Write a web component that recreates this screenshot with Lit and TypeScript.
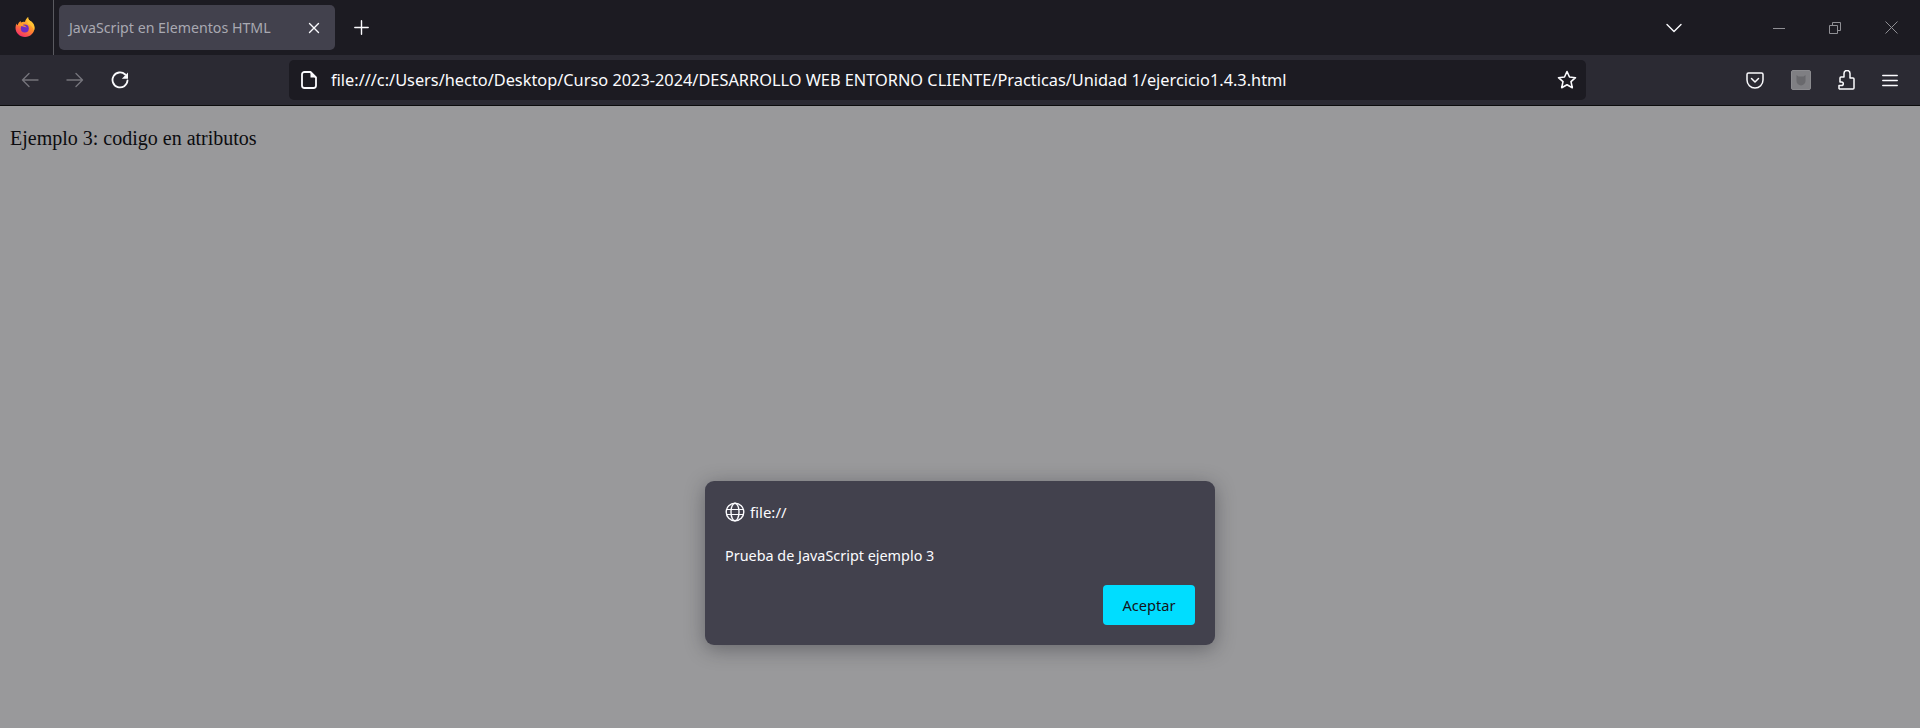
import { LitElement, html, css } from 'lit';
import { customElement } from 'lit/decorators.js';

@customElement('app-root')
export class AppRoot extends LitElement {
  static styles = css`
    :host {
      display: block;
      position: relative;
      width: 1920px;
      height: 728px;
      overflow: hidden;
      font-family: 'Noto Sans', 'Open Sans', sans-serif;
      background-color: #99999b;
    }

    svg {
      display: block;
      flex: none;
      fill: none;
      stroke: currentColor;
      stroke-width: 1.4;
      stroke-linecap: round;
      stroke-linejoin: round;
    }

    .tabbar {
      height: 55px;
      display: flex;
      align-items: center;
      background-color: #1c1b22;
      color: #fbfbfe;
    }

    .logo-box {
      width: 53px;
      height: 55px;
      display: flex;
      align-items: center;
      justify-content: center;
      border-right: 1px solid #5a5a60;
    }

    .logo-box svg {
      stroke: none;
      margin-left: -3px;
      margin-top: -1px;
    }

    .tab {
      width: 276px;
      height: 45px;
      margin-left: 5px;
      padding: 0 15px 0 10px;
      box-sizing: border-box;
      display: flex;
      align-items: center;
      justify-content: space-between;
      background-color: #42414d;
      border-radius: 5px;
      font-size: 14.2px;
      color: #a9a9b2;
    }

    .tab svg {
      color: #fbfbfe;
    }

    .new-tab {
      margin-left: 19px;
      color: #fbfbfe;
    }

    .spacer {
      flex: 1;
    }

    .tab-list {
      margin-right: 91px;
    }

    .window-controls {
      display: flex;
      align-items: center;
      gap: 44px;
      padding-right: 22px;
      color: #8f8f94;
    }

    .toolbar {
      height: 50px;
      display: flex;
      align-items: center;
      background-color: #2b2a33;
      border-bottom: 1px solid #0c0c0d;
      color: #fbfbfe;
    }

    .nav {
      width: 289px;
      display: flex;
      align-items: center;
      gap: 27px;
      padding-left: 21px;
      box-sizing: border-box;
    }

    .nav .off {
      color: #75747b;
    }

    .urlbar {
      width: 1297px;
      height: 40px;
      display: flex;
      align-items: center;
      padding: 0 9px 0 12px;
      box-sizing: border-box;
      background-color: #1c1b22;
      border-radius: 5px;
      font-size: 16.33px;
      color: #fbfbfe;
      white-space: nowrap;
    }

    .urlbar .url {
      flex: 1;
      margin-left: 14px;
    }

    .actions {
      flex: 1;
      display: flex;
      align-items: center;
      justify-content: flex-end;
      gap: 27px;
      padding-right: 22px;
    }

    .ext {
      width: 20px;
      height: 20px;
      box-sizing: border-box;
      border: 1px solid #8b8b8f;
      border-radius: 2px;
      background-color: #7f7f83;
      display: flex;
      align-items: center;
      justify-content: center;
      color: #69696d;
    }

    .page {
      padding: 21px 10px 0;
      font-family: 'Liberation Serif', serif;
      font-size: 20px;
      line-height: 23px;
      color: #0c0c0f;
    }

    .overlay {
      position: absolute;
      left: 0;
      right: 0;
      top: 106px;
      bottom: 0;
      display: flex;
      align-items: flex-end;
      justify-content: center;
      padding-bottom: 83px;
      box-sizing: border-box;
    }

    .dialog {
      width: 510px;
      height: 164px;
      padding: 19px 20px 20px;
      box-sizing: border-box;
      display: flex;
      flex-direction: column;
      background-color: #42414d;
      border-radius: 9px;
      box-shadow: 0 4px 20px rgba(28, 27, 34, 0.4);
      color: #fbfbfe;
      font-size: 14.4px;
    }

    .origin {
      display: flex;
      align-items: center;
      gap: 5px;
      height: 24px;
      font-size: 15px;
    }

    .message {
      margin-top: 20px;
      line-height: 24px;
    }

    .buttons {
      margin-top: auto;
      display: flex;
      justify-content: flex-end;
    }

    .accept {
      width: 92px;
      height: 40px;
      border: none;
      border-radius: 4px;
      background-color: #00ddff;
      color: #15141a;
      font-family: inherit;
      font-size: 14.6px;
      padding: 0;
    }
  `;

  render() {
    return html`
      <div class="tabbar">
        <div class="logo-box">
          <svg width="22" height="22" viewBox="0 0 22 22">
            <defs>
              <linearGradient id="fx" x1="0.8" y1="0" x2="0.25" y2="1">
                <stop offset="0" stop-color="#ffd43a" />
                <stop offset="0.5" stop-color="#ff8a2b" />
                <stop offset="1" stop-color="#f5286e" />
              </linearGradient>
            </defs>
            <path
              fill="url(#fx)"
              d="M11 21c-5.300 0-9.500-4-9.500-9.200 0-1.600.4-3.100 1.100-4.400.2.9.6 1.500 1.100 1.900.3-2 1.500-3.600 3.100-4.400-.2.7-.1 1.300.2 1.700 1.200-.8 2.600-1 4-.7C11.400 4 12.500 2.200 14.200 1c-.3 1.500.3 2.600 1.400 3.600 2.900 1.500 4.900 4.100 4.900 7.200 0 5.200-4.200 9.200-9.500 9.200z"
            />
            <path
              fill="#ffc233"
              d="M14.200 1c-.3 1.500.3 2.600 1.400 3.600 2.900 1.500 4.900 4.100 4.900 7.200 0 1-.2 2-.5 2.800-.9-3.600-3-5.700-6-6.700C13.200 5.400 12.600 3 14.200 1z"
            />
            <circle cx="10.800" cy="12.500" r="4" fill="#6e2bc4" />
            <path fill="#ff9a2b" d="M3.500 9.300c1.500-2 4.300-2.900 7-2.300-1 .6-1.500 1.300-1.600 2.200 2.400.1 3.200 1.500 3.800 2.500-1.300-.8-5.300-1.600-9.200-2.400z" />
          </svg>
        </div>
        <div class="tab">
          <span>JavaScript en Elementos HTML</span>
          <svg width="12" height="12" viewBox="0 0 12 12"><path d="M1.500 1.500l9 9M10.500 1.500l-9 9" /></svg>
        </div>
        <svg class="new-tab" width="15" height="15" viewBox="0 0 15 15"><path d="M7.500 .8v13.400M.8 7.500h13.400" /></svg>
        <div class="spacer"></div>
        <svg class="tab-list" width="16" height="10" viewBox="0 0 16 10"><path d="M1 1.500l7 7 7-7" /></svg>
        <div class="window-controls">
          <svg width="12" height="12" viewBox="0 0 12 12"><path stroke-width="1" stroke-linecap="butt" d="M0 6.500h12" /></svg>
          <svg width="12" height="12" viewBox="0 0 12 12">
            <path stroke-width="1" stroke-linecap="butt" d="M.5 3.500h8v8h-8zM3.500 3.500v-3h8v8h-3" />
          </svg>
          <svg width="13" height="13" viewBox="0 0 13 13"><path stroke-width="1" stroke-linecap="butt" d="M.500 .500l12 12M12.500 .500l-12 12" /></svg>
        </div>
      </div>

      <div class="toolbar">
        <div class="nav">
          <svg class="off" width="18" height="16" viewBox="0 0 18 16"><path d="M17 8H1.500M8 1.500L1.500 8 8 14.500" /></svg>
          <svg class="off" width="18" height="16" viewBox="0 0 18 16"><path d="M1 8h15.500M10 1.500L16.500 8 10 14.500" /></svg>
          <svg width="18" height="18" viewBox="0 0 18 18">
            <path d="M16.500 9.500a7.500 7.500 0 1 1-2.300-6" stroke-width="1.800" />
            <path d="M17 1.500v6.200h-6.200z" stroke="none" fill="currentColor" />
          </svg>
        </div>
        <div class="urlbar">
          <svg width="16" height="18" viewBox="0 0 16 18">
            <path d="M3.500 1h6L15 6.500v8a2.500 2.500 0 0 1-2.500 2.500h-9A2.500 2.500 0 0 1 1 14.500v-11A2.500 2.500 0 0 1 3.500 1z" stroke-width="1.800" />
            <path d="M9.500 1v5.500H15" fill="currentColor" stroke="none" />
          </svg>
          <span class="url">file:///c:/Users/hecto/Desktop/Curso 2023-2024/DESARROLLO WEB ENTORNO CLIENTE/Practicas/Unidad 1/ejercicio1.4.3.html</span>
          <svg width="20" height="20" viewBox="0 0 20 20">
            <path stroke-width="1.600" d="M10 1.500l2.500 5.500 6 .7-4.500 4 1.300 6L10 14.700l-5.300 3 1.300-6-4.500-4 6-.7z" />
          </svg>
        </div>
        <div class="actions">
          <svg width="18" height="17" viewBox="0 0 18 17">
            <path stroke-width="1.500" d="M2.500 1h13A1.500 1.500 0 0 1 17 2.500V8a8 8 0 0 1-16 0V2.500A1.500 1.500 0 0 1 2.500 1z" />
            <path stroke-width="1.500" d="M5.500 6.500L9 10l3.500-3.500" />
          </svg>
          <div class="ext">
            <svg width="12" height="12" viewBox="0 0 12 12"><path stroke="none" fill="currentColor" d="M1.500 1l2 1.500h5L10.500 1v6c0 2.500-2 4-4.500 4.500C3.500 11 1.500 9.500 1.500 7z" /></svg>
          </div>
          <svg width="17" height="20" viewBox="0 0 17 20">
            <path stroke-width="1.500" d="M1.500 19H15a1 1 0 0 0 1-1V9a1 1 0 0 0-1-1h-3V3.500a3 3 0 0 0-6 0V7H3a1 1 0 0 0-1 1v4h1.500a1.800 1.800 0 0 1 0 3.600H1V18.500z" />
          </svg>
          <svg width="16" height="13" viewBox="0 0 16 13"><path stroke-width="1.500" d="M.8 1.500h14.400M.8 6.500h14.400M.8 11.500h14.400" /></svg>
        </div>
      </div>

      <div class="page">Ejemplo 3: codigo en atributos</div>

      <div class="overlay">
        <div class="dialog">
          <div class="origin">
            <svg width="20" height="20" viewBox="0 0 20 20">
              <circle cx="10" cy="10" r="8.800" />
              <ellipse cx="10" cy="10" rx="4" ry="8.800" />
              <path d="M1.500 7.500h17M1.500 12.500h17" stroke-width="1.200" />
            </svg>
            <span>file://</span>
          </div>
          <div class="message">Prueba de JavaScript ejemplo 3</div>
          <div class="buttons"><button class="accept">Aceptar</button></div>
        </div>
      </div>
    `;
  }
}
